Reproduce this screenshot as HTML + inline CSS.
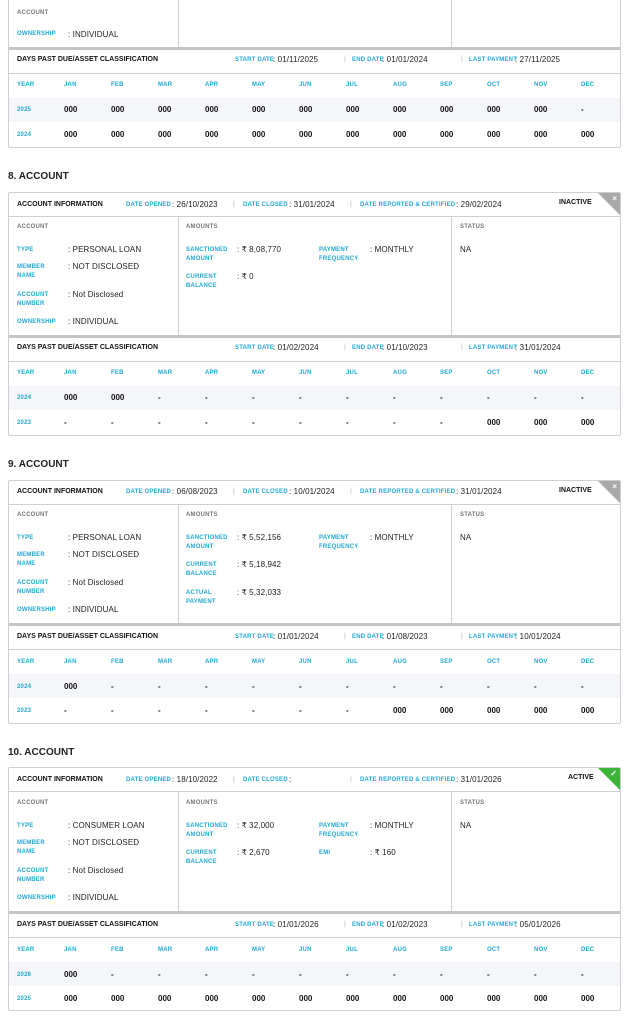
<!DOCTYPE html>
<html><head><meta charset="utf-8"><style>
*{margin:0;padding:0;box-sizing:border-box}
body{width:641px;height:1021px;background:#fff;position:relative;overflow:hidden;font-family:"Liberation Sans",Arial,sans-serif;color:#222}
.card{position:absolute;left:8px;width:613px;height:244px;border:1px solid #cfcfcf;border-radius:2px;background:#fff;overflow:hidden}
.card *{position:absolute;white-space:nowrap}
.hl{left:0;right:0;height:1px;background:#cfcfcf}
.thick{left:0;right:0;height:3px;background:#c4c4c4}
.vl{width:1px;background:#cfcfcf}
.rowbg{left:0;right:0;height:24px;background:#f5f6fa}
.h{font-size:7px;font-weight:bold;color:#111}
.c{font-size:6px;font-weight:bold;color:#22a8d4;line-height:9px;letter-spacing:.2px}
.g{font-size:6px;font-weight:bold;color:#777;letter-spacing:.2px}
.v{font-size:8px;color:#222;letter-spacing:.1px}
.vb{font-size:8px;color:#111;font-weight:bold}
.sep{font-size:7px;color:#bbb}
.title{position:absolute;left:8px;font-size:10px;font-weight:bold;color:#222}
.tri{right:0;top:0;width:0;height:0;border-top:22px solid #a9a9a9;border-left:22px solid transparent}
.tri.green{border-top-color:#3db33a}
.mk{right:3px;top:1px;color:#fff;font-size:8px;font-weight:bold}
</style></head><body>

<!-- partial card 7 -->
<div class="card" style="top:-96px">
<div class="vl" style="left:169px;top:0;height:143px"></div>
<div class="vl" style="left:442px;top:0;height:143px"></div>
<span class="g" style="left:8px;top:105px">ACCOUNT</span>
<span class="c" style="left:8px;top:125px">OWNERSHIP</span><span class="v" style="left:59px;top:125px">: INDIVIDUAL</span>
<div class="thick" style="top:142px"></div>
<span class="h" style="left:8px;top:151px">DAYS PAST DUE/ASSET CLASSIFICATION</span>
<span class="c" style="left:226px;top:151px">START DATE</span><span class="v" style="left:264px;top:150px">: 01/11/2025</span>
<span class="sep" style="left:335px;top:151px">|</span>
<span class="c" style="left:343px;top:151px">END DATE</span><span class="v" style="left:373px;top:150px">: 01/01/2024</span>
<span class="sep" style="left:452px;top:151px">|</span>
<span class="c" style="left:460px;top:151px">LAST PAYMENT</span><span class="v" style="left:506px;top:150px">: 27/11/2025</span>
<div class="hl" style="top:168px"></div>
<div class="rowbg" style="top:193px"></div>
<span class="c" style="left:8px;top:176px">YEAR</span><span class="c" style="left:55px;top:176px">JAN</span><span class="c" style="left:102px;top:176px">FEB</span><span class="c" style="left:149px;top:176px">MAR</span><span class="c" style="left:196px;top:176px">APR</span><span class="c" style="left:243px;top:176px">MAY</span><span class="c" style="left:290px;top:176px">JUN</span><span class="c" style="left:337px;top:176px">JUL</span><span class="c" style="left:384px;top:176px">AUG</span><span class="c" style="left:431px;top:176px">SEP</span><span class="c" style="left:478px;top:176px">OCT</span><span class="c" style="left:525px;top:176px">NOV</span><span class="c" style="left:572px;top:176px">DEC</span>
<span class="c" style="left:8px;top:201px">2025</span><span class="vb" style="left:55px;top:200px">000</span><span class="vb" style="left:102px;top:200px">000</span><span class="vb" style="left:149px;top:200px">000</span><span class="vb" style="left:196px;top:200px">000</span><span class="vb" style="left:243px;top:200px">000</span><span class="vb" style="left:290px;top:200px">000</span><span class="vb" style="left:337px;top:200px">000</span><span class="vb" style="left:384px;top:200px">000</span><span class="vb" style="left:431px;top:200px">000</span><span class="vb" style="left:478px;top:200px">000</span><span class="vb" style="left:525px;top:200px">000</span><span class="vb" style="left:572px;top:200px">-</span>
<span class="c" style="left:8px;top:226px">2024</span><span class="vb" style="left:55px;top:225px">000</span><span class="vb" style="left:102px;top:225px">000</span><span class="vb" style="left:149px;top:225px">000</span><span class="vb" style="left:196px;top:225px">000</span><span class="vb" style="left:243px;top:225px">000</span><span class="vb" style="left:290px;top:225px">000</span><span class="vb" style="left:337px;top:225px">000</span><span class="vb" style="left:384px;top:225px">000</span><span class="vb" style="left:431px;top:225px">000</span><span class="vb" style="left:478px;top:225px">000</span><span class="vb" style="left:525px;top:225px">000</span><span class="vb" style="left:572px;top:225px">000</span>
</div>

<!-- card 8 -->
<div class="title" style="top:171px">8. ACCOUNT</div>
<div class="card" style="top:192px">
<span class="h" style="left:8px;top:8px">ACCOUNT INFORMATION</span>
<span class="c" style="left:117px;top:8px">DATE OPENED</span><span class="v" style="left:163px;top:7px">: 26/10/2023</span>
<span class="sep" style="left:224px;top:8px">|</span>
<span class="c" style="left:234px;top:8px">DATE CLOSED</span><span class="v" style="left:280px;top:7px">: 31/01/2024</span>
<span class="sep" style="left:341px;top:8px">|</span>
<span class="c" style="left:351px;top:8px">DATE REPORTED &amp; CERTIFIED</span><span class="v" style="left:447px;top:7px">: 29/02/2024</span>
<span class="h" style="left:550px;top:6px">INACTIVE</span>
<div class="tri"></div><span class="mk">×</span>
<div class="hl" style="top:23px"></div>
<div class="vl" style="left:169px;top:23px;height:120px"></div>
<div class="vl" style="left:442px;top:23px;height:120px"></div>
<span class="g" style="left:8px;top:31px">ACCOUNT</span>
<span class="c" style="left:8px;top:53px">TYPE</span><span class="v" style="left:59px;top:52px">: PERSONAL LOAN</span>
<span class="c" style="left:8px;top:70px">MEMBER<br>NAME</span><span class="v" style="left:59px;top:69px">: NOT DISCLOSED</span>
<span class="c" style="left:8px;top:98px">ACCOUNT<br>NUMBER</span><span class="v" style="left:59px;top:97px">: Not Disclosed</span>
<span class="c" style="left:8px;top:125px">OWNERSHIP</span><span class="v" style="left:59px;top:124px">: INDIVIDUAL</span>
<span class="g" style="left:177px;top:31px">AMOUNTS</span>
<span class="c" style="left:177px;top:53px">SANCTIONED<br>AMOUNT</span><span class="v" style="left:228px;top:52px">: ₹ 8,08,770</span>
<span class="c" style="left:177px;top:80px">CURRENT<br>BALANCE</span><span class="v" style="left:228px;top:79px">: ₹ 0</span>
<span class="c" style="left:310px;top:53px">PAYMENT<br>FREQUENCY</span><span class="v" style="left:361px;top:52px">: MONTHLY</span>
<span class="g" style="left:451px;top:31px">STATUS</span>
<span class="v" style="left:451px;top:52px">NA</span>
<div class="thick" style="top:142px"></div>
<span class="h" style="left:8px;top:151px">DAYS PAST DUE/ASSET CLASSIFICATION</span>
<span class="c" style="left:226px;top:151px">START DATE</span><span class="v" style="left:264px;top:150px">: 01/02/2024</span>
<span class="sep" style="left:335px;top:151px">|</span>
<span class="c" style="left:343px;top:151px">END DATE</span><span class="v" style="left:373px;top:150px">: 01/10/2023</span>
<span class="sep" style="left:452px;top:151px">|</span>
<span class="c" style="left:460px;top:151px">LAST PAYMENT</span><span class="v" style="left:506px;top:150px">: 31/01/2024</span>
<div class="hl" style="top:168px"></div>
<div class="rowbg" style="top:193px"></div>
<span class="c" style="left:8px;top:176px">YEAR</span><span class="c" style="left:55px;top:176px">JAN</span><span class="c" style="left:102px;top:176px">FEB</span><span class="c" style="left:149px;top:176px">MAR</span><span class="c" style="left:196px;top:176px">APR</span><span class="c" style="left:243px;top:176px">MAY</span><span class="c" style="left:290px;top:176px">JUN</span><span class="c" style="left:337px;top:176px">JUL</span><span class="c" style="left:384px;top:176px">AUG</span><span class="c" style="left:431px;top:176px">SEP</span><span class="c" style="left:478px;top:176px">OCT</span><span class="c" style="left:525px;top:176px">NOV</span><span class="c" style="left:572px;top:176px">DEC</span>
<span class="c" style="left:8px;top:201px">2024</span><span class="vb" style="left:55px;top:200px">000</span><span class="vb" style="left:102px;top:200px">000</span><span class="vb" style="left:149px;top:200px">-</span><span class="vb" style="left:196px;top:200px">-</span><span class="vb" style="left:243px;top:200px">-</span><span class="vb" style="left:290px;top:200px">-</span><span class="vb" style="left:337px;top:200px">-</span><span class="vb" style="left:384px;top:200px">-</span><span class="vb" style="left:431px;top:200px">-</span><span class="vb" style="left:478px;top:200px">-</span><span class="vb" style="left:525px;top:200px">-</span><span class="vb" style="left:572px;top:200px">-</span>
<span class="c" style="left:8px;top:226px">2023</span><span class="vb" style="left:55px;top:225px">-</span><span class="vb" style="left:102px;top:225px">-</span><span class="vb" style="left:149px;top:225px">-</span><span class="vb" style="left:196px;top:225px">-</span><span class="vb" style="left:243px;top:225px">-</span><span class="vb" style="left:290px;top:225px">-</span><span class="vb" style="left:337px;top:225px">-</span><span class="vb" style="left:384px;top:225px">-</span><span class="vb" style="left:431px;top:225px">-</span><span class="vb" style="left:478px;top:225px">000</span><span class="vb" style="left:525px;top:225px">000</span><span class="vb" style="left:572px;top:225px">000</span>
</div>

<!-- card 9 -->
<div class="title" style="top:459px">9. ACCOUNT</div>
<div class="card" style="top:480px">
<span class="h" style="left:8px;top:7px">ACCOUNT INFORMATION</span>
<span class="c" style="left:117px;top:7px">DATE OPENED</span><span class="v" style="left:163px;top:6px">: 06/08/2023</span>
<span class="sep" style="left:224px;top:7px">|</span>
<span class="c" style="left:234px;top:7px">DATE CLOSED</span><span class="v" style="left:280px;top:6px">: 10/01/2024</span>
<span class="sep" style="left:341px;top:7px">|</span>
<span class="c" style="left:351px;top:7px">DATE REPORTED &amp; CERTIFIED</span><span class="v" style="left:447px;top:6px">: 31/01/2024</span>
<span class="h" style="left:550px;top:6px">INACTIVE</span>
<div class="tri"></div><span class="mk">×</span>
<div class="hl" style="top:23px"></div>
<div class="vl" style="left:169px;top:23px;height:120px"></div>
<div class="vl" style="left:442px;top:23px;height:120px"></div>
<span class="g" style="left:8px;top:31px">ACCOUNT</span>
<span class="c" style="left:8px;top:53px">TYPE</span><span class="v" style="left:59px;top:52px">: PERSONAL LOAN</span>
<span class="c" style="left:8px;top:70px">MEMBER<br>NAME</span><span class="v" style="left:59px;top:69px">: NOT DISCLOSED</span>
<span class="c" style="left:8px;top:98px">ACCOUNT<br>NUMBER</span><span class="v" style="left:59px;top:97px">: Not Disclosed</span>
<span class="c" style="left:8px;top:125px">OWNERSHIP</span><span class="v" style="left:59px;top:124px">: INDIVIDUAL</span>
<span class="g" style="left:177px;top:31px">AMOUNTS</span>
<span class="c" style="left:177px;top:53px">SANCTIONED<br>AMOUNT</span><span class="v" style="left:228px;top:52px">: ₹ 5,52,156</span>
<span class="c" style="left:177px;top:80px">CURRENT<br>BALANCE</span><span class="v" style="left:228px;top:79px">: ₹ 5,18,942</span>
<span class="c" style="left:177px;top:108px">ACTUAL<br>PAYMENT</span><span class="v" style="left:228px;top:107px">: ₹ 5,32,033</span>
<span class="c" style="left:310px;top:53px">PAYMENT<br>FREQUENCY</span><span class="v" style="left:361px;top:52px">: MONTHLY</span>
<span class="g" style="left:451px;top:31px">STATUS</span>
<span class="v" style="left:451px;top:52px">NA</span>
<div class="thick" style="top:142px"></div>
<span class="h" style="left:8px;top:152px">DAYS PAST DUE/ASSET CLASSIFICATION</span>
<span class="c" style="left:226px;top:152px">START DATE</span><span class="v" style="left:264px;top:151px">: 01/01/2024</span>
<span class="sep" style="left:335px;top:152px">|</span>
<span class="c" style="left:343px;top:152px">END DATE</span><span class="v" style="left:373px;top:151px">: 01/08/2023</span>
<span class="sep" style="left:452px;top:152px">|</span>
<span class="c" style="left:460px;top:152px">LAST PAYMENT</span><span class="v" style="left:506px;top:151px">: 10/01/2024</span>
<div class="hl" style="top:168px"></div>
<div class="rowbg" style="top:193px"></div>
<span class="c" style="left:8px;top:177px">YEAR</span><span class="c" style="left:55px;top:177px">JAN</span><span class="c" style="left:102px;top:177px">FEB</span><span class="c" style="left:149px;top:177px">MAR</span><span class="c" style="left:196px;top:177px">APR</span><span class="c" style="left:243px;top:177px">MAY</span><span class="c" style="left:290px;top:177px">JUN</span><span class="c" style="left:337px;top:177px">JUL</span><span class="c" style="left:384px;top:177px">AUG</span><span class="c" style="left:431px;top:177px">SEP</span><span class="c" style="left:478px;top:177px">OCT</span><span class="c" style="left:525px;top:177px">NOV</span><span class="c" style="left:572px;top:177px">DEC</span>
<span class="c" style="left:8px;top:202px">2024</span><span class="vb" style="left:55px;top:201px">000</span><span class="vb" style="left:102px;top:201px">-</span><span class="vb" style="left:149px;top:201px">-</span><span class="vb" style="left:196px;top:201px">-</span><span class="vb" style="left:243px;top:201px">-</span><span class="vb" style="left:290px;top:201px">-</span><span class="vb" style="left:337px;top:201px">-</span><span class="vb" style="left:384px;top:201px">-</span><span class="vb" style="left:431px;top:201px">-</span><span class="vb" style="left:478px;top:201px">-</span><span class="vb" style="left:525px;top:201px">-</span><span class="vb" style="left:572px;top:201px">-</span>
<span class="c" style="left:8px;top:226px">2023</span><span class="vb" style="left:55px;top:225px">-</span><span class="vb" style="left:102px;top:225px">-</span><span class="vb" style="left:149px;top:225px">-</span><span class="vb" style="left:196px;top:225px">-</span><span class="vb" style="left:243px;top:225px">-</span><span class="vb" style="left:290px;top:225px">-</span><span class="vb" style="left:337px;top:225px">-</span><span class="vb" style="left:384px;top:225px">000</span><span class="vb" style="left:431px;top:225px">000</span><span class="vb" style="left:478px;top:225px">000</span><span class="vb" style="left:525px;top:225px">000</span><span class="vb" style="left:572px;top:225px">000</span>
</div>

<!-- card 10 -->
<div class="title" style="top:747px">10. ACCOUNT</div>
<div class="card" style="top:767px">
<span class="h" style="left:8px;top:8px">ACCOUNT INFORMATION</span>
<span class="c" style="left:117px;top:8px">DATE OPENED</span><span class="v" style="left:163px;top:7px">: 18/10/2022</span>
<span class="sep" style="left:224px;top:8px">|</span>
<span class="c" style="left:234px;top:8px">DATE CLOSED</span><span class="v" style="left:280px;top:7px">:</span>
<span class="sep" style="left:341px;top:8px">|</span>
<span class="c" style="left:351px;top:8px">DATE REPORTED &amp; CERTIFIED</span><span class="v" style="left:447px;top:7px">: 31/01/2026</span>
<span class="h" style="left:559px;top:6px">ACTIVE</span>
<div class="tri green"></div><span class="mk">✓</span>
<div class="hl" style="top:23px"></div>
<div class="vl" style="left:169px;top:23px;height:120px"></div>
<div class="vl" style="left:442px;top:23px;height:120px"></div>
<span class="g" style="left:8px;top:32px">ACCOUNT</span>
<span class="c" style="left:8px;top:54px">TYPE</span><span class="v" style="left:59px;top:53px">: CONSUMER LOAN</span>
<span class="c" style="left:8px;top:71px">MEMBER<br>NAME</span><span class="v" style="left:59px;top:70px">: NOT DISCLOSED</span>
<span class="c" style="left:8px;top:99px">ACCOUNT<br>NUMBER</span><span class="v" style="left:59px;top:98px">: Not Disclosed</span>
<span class="c" style="left:8px;top:126px">OWNERSHIP</span><span class="v" style="left:59px;top:125px">: INDIVIDUAL</span>
<span class="g" style="left:177px;top:32px">AMOUNTS</span>
<span class="c" style="left:177px;top:54px">SANCTIONED<br>AMOUNT</span><span class="v" style="left:228px;top:53px">: ₹ 32,000</span>
<span class="c" style="left:177px;top:81px">CURRENT<br>BALANCE</span><span class="v" style="left:228px;top:80px">: ₹ 2,670</span>
<span class="c" style="left:310px;top:54px">PAYMENT<br>FREQUENCY</span><span class="v" style="left:361px;top:53px">: MONTHLY</span>
<span class="c" style="left:310px;top:81px">EMI</span><span class="v" style="left:361px;top:80px">: ₹ 160</span>
<span class="g" style="left:451px;top:32px">STATUS</span>
<span class="v" style="left:451px;top:53px">NA</span>
<div class="thick" style="top:143px"></div>
<span class="h" style="left:8px;top:153px">DAYS PAST DUE/ASSET CLASSIFICATION</span>
<span class="c" style="left:226px;top:153px">START DATE</span><span class="v" style="left:264px;top:152px">: 01/01/2026</span>
<span class="sep" style="left:335px;top:153px">|</span>
<span class="c" style="left:343px;top:153px">END DATE</span><span class="v" style="left:373px;top:152px">: 01/02/2023</span>
<span class="sep" style="left:452px;top:153px">|</span>
<span class="c" style="left:460px;top:153px">LAST PAYMENT</span><span class="v" style="left:506px;top:152px">: 05/01/2026</span>
<div class="hl" style="top:169px"></div>
<div class="rowbg" style="top:194px"></div>
<span class="c" style="left:8px;top:178px">YEAR</span><span class="c" style="left:55px;top:178px">JAN</span><span class="c" style="left:102px;top:178px">FEB</span><span class="c" style="left:149px;top:178px">MAR</span><span class="c" style="left:196px;top:178px">APR</span><span class="c" style="left:243px;top:178px">MAY</span><span class="c" style="left:290px;top:178px">JUN</span><span class="c" style="left:337px;top:178px">JUL</span><span class="c" style="left:384px;top:178px">AUG</span><span class="c" style="left:431px;top:178px">SEP</span><span class="c" style="left:478px;top:178px">OCT</span><span class="c" style="left:525px;top:178px">NOV</span><span class="c" style="left:572px;top:178px">DEC</span>
<span class="c" style="left:8px;top:203px">2026</span><span class="vb" style="left:55px;top:202px">000</span><span class="vb" style="left:102px;top:202px">-</span><span class="vb" style="left:149px;top:202px">-</span><span class="vb" style="left:196px;top:202px">-</span><span class="vb" style="left:243px;top:202px">-</span><span class="vb" style="left:290px;top:202px">-</span><span class="vb" style="left:337px;top:202px">-</span><span class="vb" style="left:384px;top:202px">-</span><span class="vb" style="left:431px;top:202px">-</span><span class="vb" style="left:478px;top:202px">-</span><span class="vb" style="left:525px;top:202px">-</span><span class="vb" style="left:572px;top:202px">-</span>
<span class="c" style="left:8px;top:227px">2025</span><span class="vb" style="left:55px;top:226px">000</span><span class="vb" style="left:102px;top:226px">000</span><span class="vb" style="left:149px;top:226px">000</span><span class="vb" style="left:196px;top:226px">000</span><span class="vb" style="left:243px;top:226px">000</span><span class="vb" style="left:290px;top:226px">000</span><span class="vb" style="left:337px;top:226px">000</span><span class="vb" style="left:384px;top:226px">000</span><span class="vb" style="left:431px;top:226px">000</span><span class="vb" style="left:478px;top:226px">000</span><span class="vb" style="left:525px;top:226px">000</span><span class="vb" style="left:572px;top:226px">000</span>
</div>
</body></html>
